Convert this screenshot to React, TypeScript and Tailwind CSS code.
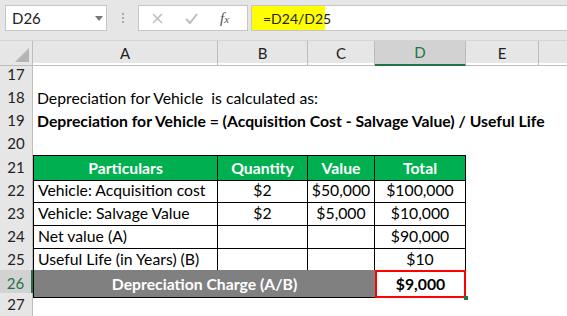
import React from "react";

const cols = "grid grid-cols-[33px_185px_90px_67px_91px_73px_1fr]";
const font = { fontFamily: "Lato, 'Open Sans', sans-serif" };

function RowHead({ n, sel }: { n: number; sel?: boolean }) {
  return (
    <div
      className={
        "flex items-center justify-center border-b border-[#d4d4d4] text-[15px] " +
        (sel
          ? "bg-[#d2d2d2] text-[#217346] border-r-2 border-r-[#217346]"
          : "bg-[#e6e6e6] text-[#222] border-r border-r-[#bdbdbd]")
      }
    >
      {n}
    </div>
  );
}

function DataRow({
  n,
  a,
  b,
  c,
  d,
}: {
  n: number;
  a: string;
  b?: string;
  c?: string;
  d: string;
}) {
  return (
    <div className={cols + " h-[23px]"}>
      <RowHead n={n} />
      <div className="flex items-center pl-[4px] border-l border-r border-b border-black text-[15.75px] text-black whitespace-pre">{a}</div>
      <div className="flex items-center justify-center border-r border-b border-black text-[15.75px] text-black">{b}</div>
      <div className="flex items-center justify-center border-r border-b border-black text-[15.75px] text-black">{c}</div>
      <div className="flex items-center justify-center border-r border-b border-black text-[15.75px] text-black">{d}</div>
      <div />
      <div />
    </div>
  );
}

function EmptyRow({ n, children }: { n: number; children?: React.ReactNode }) {
  return (
    <div className={cols + " h-[23px]"}>
      <RowHead n={n} />
      <div className="col-span-6 flex items-center pl-[4px] text-[15.75px] text-black whitespace-pre">{children}</div>
    </div>
  );
}

export default function App() {
  return (
    <div className="w-[567px] h-[316px] overflow-hidden bg-white" style={font}>
      {/* formula bar */}
      <div className="h-[40px] bg-[#e6e6e6] flex items-start pt-[5px] pl-[5px]">
        <div className="relative w-[102px] h-[26px] bg-white border border-[#c6c6c6] flex items-center pl-[6px] text-[15px] text-[#222]">
          D26
          <svg className="absolute left-[89px] top-[10px]" width="8" height="5" viewBox="0 0 8 5">
            <path d="M0 0 L8 0 L4 5 Z" fill="#777" />
          </svg>
        </div>
        <div className="w-[31px] h-[26px] flex flex-col items-center justify-center gap-[2px]">
          <div className="w-[2px] h-[2px] bg-[#aaa]" />
          <div className="w-[2px] h-[2px] bg-[#aaa]" />
          <div className="w-[2px] h-[2px] bg-[#aaa]" />
        </div>
        <div className="w-[110px] h-[26px] bg-white border border-[#c6c6c6] flex items-center">
          <svg className="ml-[13px]" width="11" height="11" viewBox="0 0 11 11">
            <path d="M1 1 L10 10 M10 1 L1 10" stroke="#bdbdbd" strokeWidth="1.5" />
          </svg>
          <svg className="ml-[22px]" width="13" height="11" viewBox="0 0 13 11">
            <path d="M1 6 L5 10 L12 1" stroke="#bdbdbd" strokeWidth="2" fill="none" />
          </svg>
          <span
            className="ml-[22px] text-[15px] italic text-[#555]"
            style={{ fontFamily: "'Liberation Serif', serif" }}
          >
            f<span className="text-[11px]">x</span>
          </span>
        </div>
        <div className="ml-[3px] flex-1 h-[26px] bg-white border-y border-l border-[#c6c6c6] flex items-center">
          <div className="h-full w-[73px] bg-[#ffff00] flex items-center pl-[11px] text-[14px] text-[#222]">=D24/D25</div>
        </div>
      </div>
      {/* column headers */}
      <div className={cols + " h-[23px] bg-[#e6e6e6] border-t border-[#d4d4d4]"}>
        <div className="relative border-r border-b border-[#bdbdbd]">
          <svg className="absolute right-[3px] bottom-[3px]" width="14" height="14" viewBox="0 0 14 14">
            <path d="M14 0 L14 14 L0 14 Z" fill="#b4b4b4" />
          </svg>
        </div>
        <div className="flex items-center justify-center border-r border-b border-[#bdbdbd] text-[15px] text-[#222]">A</div>
        <div className="flex items-center justify-center border-r border-b border-[#bdbdbd] text-[15px] text-[#222]">B</div>
        <div className="flex items-center justify-center border-r border-b border-[#bdbdbd] text-[15px] text-[#222]">C</div>
        <div className="flex items-center justify-center bg-[#d2d2d2] border-r border-[#bdbdbd] border-b-2 border-b-[#217346] text-[15px] text-[#217346]">D</div>
        <div className="flex items-center justify-center border-r border-b border-[#bdbdbd] text-[15px] text-[#222]">E</div>
        <div className="border-b border-[#bdbdbd]" />
      </div>
      <EmptyRow n={17} />
      <EmptyRow n={18}>{"Depreciation for Vehicle  is calculated as:"}</EmptyRow>
      <EmptyRow n={19}>
        <span className="font-bold">Depreciation for Vehicle = (Acquisition Cost - Salvage Value) / Useful Life</span>
      </EmptyRow>
      <EmptyRow n={20} />
      {/* table header */}
      <div className={cols + " h-[23px]"}>
        <RowHead n={21} />
        <div className="flex items-center justify-center bg-[#00b050] border border-black text-[15.75px] font-bold text-white">Particulars</div>
        <div className="flex items-center justify-center bg-[#00b050] border-r border-y border-black text-[15.75px] font-bold text-white">Quantity</div>
        <div className="flex items-center justify-center bg-[#00b050] border-r border-y border-black text-[15.75px] font-bold text-white">Value</div>
        <div className="flex items-center justify-center bg-[#00b050] border-r border-y border-black text-[15.75px] font-bold text-white">Total</div>
        <div />
        <div />
      </div>
      <DataRow n={22} a="Vehicle: Acquisition cost" b="$2" c="$50,000" d="$100,000" />
      <DataRow n={23} a="Vehicle: Salvage Value" b="$2" c="$5,000" d="$10,000" />
      <DataRow n={24} a="Net value (A)" d="$90,000" />
      <DataRow n={25} a="Useful Life (in Years) (B)" d="$10" />
      <div className={cols + " h-[23px]"}>
        <RowHead n={26} sel />
        <div className="col-span-3 flex items-center justify-center bg-[#808080] border-l border-b border-black text-[15.75px] font-bold text-white">
          Depreciation Charge (A/B)
        </div>
        <div className="relative flex items-center justify-center border-2 border-[#ff0000] text-[15.75px] font-bold text-black">
          $9,000
          <div className="absolute right-[-4px] bottom-[-4px] w-[4px] h-[4px] bg-[#217346]" />
        </div>
        <div />
        <div />
      </div>
      <EmptyRow n={27} />
    </div>
  );
}
